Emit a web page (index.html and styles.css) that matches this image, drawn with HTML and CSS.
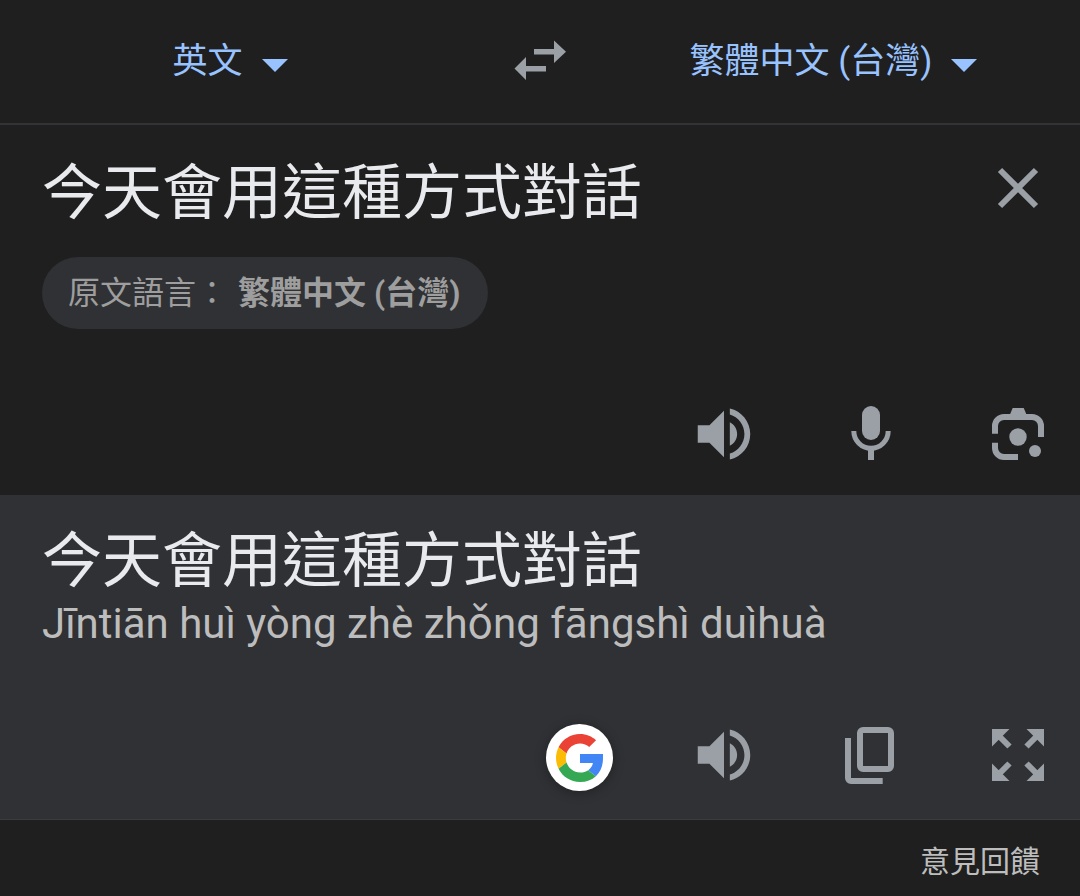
FILE: index.html
```html
<!DOCTYPE html>
<html lang="zh-Hant-TW">
<head>
    <meta charset="UTF-8">
    <meta name="viewport" content="width=device-width, initial-scale=1.0">
    <title>翻譯</title>
    <link rel="stylesheet" href="styles.css">
</head>
<body>

    <!-- Shared icons -->
    <svg class="sprite" aria-hidden="true">
        <symbol id="icon-volume" viewBox="0 0 24 24">
            <path d="M3 9v6h4l5 5V4L7 9H3zm13.5 3c0-1.77-1.02-3.29-2.5-4.03v8.05c1.48-.73 2.5-2.25 2.5-4.02zM14 3.23v2.06c2.89.86 5 3.54 5 6.71s-2.11 5.85-5 6.71v2.06c4.01-.91 7-4.49 7-8.77s-2.99-7.86-7-8.77z"/>
        </symbol>
        <symbol id="icon-caret" viewBox="0 0 26 13">
            <path d="M0 0h26L13 13z"/>
        </symbol>
    </svg>

    <!-- Language bar -->
    <header class="lang-bar">
        <div class="lang lang-source">
            <select aria-label="原文語言">
                <option>英文</option>
            </select>
            <svg class="caret"><use href="#icon-caret"/></svg>
        </div>
        <button class="swap-btn" type="button" aria-label="切換語言">
            <svg viewBox="0 0 52 40">
                <path d="M20 9h20V.5l12 11.2L40 23v-8.5H20z"/>
                <path d="M32 26H12v-9L.5 28.5 12 40v-8.5h20z"/>
            </svg>
        </button>
        <div class="lang lang-target">
            <select aria-label="譯文語言">
                <option>繁體中文 (台灣)</option>
            </select>
            <svg class="caret"><use href="#icon-caret"/></svg>
        </div>
    </header>

    <main>
        <!-- Source text -->
        <section class="panel source">
            <div class="source-row">
                <textarea class="phrase" rows="1" aria-label="輸入文字" spellcheck="false">今天會用這種方式對話</textarea>
                <button class="icon-btn" type="button" aria-label="清除">
                    <svg viewBox="0 0 70 70">
                        <path class="line" d="M17 17l36 36M53 17L17 53"/>
                    </svg>
                </button>
            </div>
            <button class="chip" type="button">原文語言：<b>繁體中文 (台灣)</b></button>
            <div class="toolbar">
                <button class="icon-btn" type="button" aria-label="聆聽">
                    <svg><use href="#icon-volume"/></svg>
                </button>
                <button class="icon-btn" type="button" aria-label="語音輸入">
                    <svg viewBox="0 0 70 70">
                        <rect x="26" y="7" width="18" height="34" rx="9"/>
                        <path class="line mic" d="M17.8 32a17.2 17.2 0 0 0 34.4 0"/>
                        <path d="M32 50h6v11h-6z"/>
                    </svg>
                </button>
                <button class="icon-btn" type="button" aria-label="相機">
                    <svg viewBox="0 0 70 70">
                        <path class="line" d="M12 34.7V27a9 9 0 0 1 9-9h28a9 9 0 0 1 9 9v11M12 43.7V49a9 9 0 0 0 9 9h14"/>
                        <path d="M29.7 9h11l3 7h-17z"/>
                        <circle cx="35" cy="38" r="8.7"/>
                        <circle cx="52" cy="52" r="6"/>
                    </svg>
                </button>
            </div>
        </section>

        <!-- Translation -->
        <section class="panel result">
            <p class="phrase">今天會用這種方式對話</p>
            <p class="pinyin">Jīntiān huì yòng zhè zhǒng fāngshì duìhuà</p>
            <div class="toolbar">
                <button class="google-btn" type="button" aria-label="Google 搜尋">
                    <svg viewBox="0 0 48 48">
                        <path fill="#ea4335" d="M24 9.5c3.54 0 6.71 1.22 9.21 3.6l6.85-6.85C35.9 2.38 30.47 0 24 0 14.62 0 6.51 5.38 2.56 13.22l7.98 6.19C12.43 13.72 17.74 9.5 24 9.5z"/>
                        <path fill="#4285f4" d="M46.98 20H24v9.02h12.94c-.58 2.96-2.26 5.48-4.78 7.18l7.73 6c4.51-4.18 7.09-10.36 7.09-17.65z"/>
                        <path fill="#fbbc05" d="M10.53 28.59c-.48-1.45-.76-2.99-.76-4.59s.27-3.14.76-4.59l-7.98-6.19C.92 16.46 0 20.12 0 24c0 3.88.92 7.54 2.56 10.78l7.97-6.19z"/>
                        <path fill="#34a853" d="M24 48c6.48 0 11.93-2.13 15.89-5.81l-7.73-6c-2.15 1.45-4.92 2.3-8.16 2.3-6.26 0-11.57-4.22-13.47-9.91l-7.98 6.19C6.51 42.62 14.62 48 24 48z"/>
                    </svg>
                </button>
                <button class="icon-btn" type="button" aria-label="聆聽譯文">
                    <svg><use href="#icon-volume"/></svg>
                </button>
                <button class="icon-btn" type="button" aria-label="複製">
                    <svg viewBox="0 0 70 70">
                        <rect class="line" x="24" y="10" width="31" height="39" rx="3"/>
                        <path class="line" d="M12 18v40a3 3 0 0 0 3 3h31.7"/>
                    </svg>
                </button>
                <button class="icon-btn" type="button" aria-label="全螢幕">
                    <svg viewBox="0 0 70 70">
                        <path d="M9 9h17.5L9 26.5zM61 9v17.5L43.5 9zM9 61V43.5L26.5 61zM61 61H43.5L61 43.500z"/>
                        <path class="line" d="M14 14l12.5 12.5M56 14L43.5 26.5M14 56l12.5-12.5M56 56L43.5 43.5"/>
                    </svg>
                </button>
            </div>
        </section>
    </main>

    <footer>
        <a href="#feedback">意見回饋</a>
    </footer>

</body>
</html>
```
FILE: styles.css
```css
* {
    box-sizing: border-box;
}

body {
    margin: 0;
    background-color: #1f1f1f;
    color: #e8eaed;
    font-family: Roboto, "Noto Sans CJK TC", sans-serif;
}

button, select, textarea {
    margin: 0;
    padding: 0;
    border: none;
    background: none;
    color: inherit;
    font-family: inherit;
}

button {
    cursor: pointer;
}

svg {
    display: block;
    fill: currentColor;
}

.sprite {
    display: none;
}

/* Language bar */
.lang-bar {
    display: grid;
    grid-template-columns: 1fr 160px 1fr;
    align-items: center;
    height: 125px;
    padding-bottom: 3px;
    border-bottom: 2px solid #333335;
}

.lang {
    display: flex;
    justify-content: center;
    align-items: center;
    gap: 18px;
    color: #99c3ff;
}

.lang-target {
    padding-right: 34px;
}

.lang select {
    appearance: none;
    padding-top: 4px;
    font-size: 35px;
    line-height: 48px;
}

.caret {
    width: 26px;
    height: 13px;
    margin-top: 10px;
}

.swap-btn {
    justify-self: center;
    color: #9aa0a6;
}

.swap-btn svg {
    width: 52px;
    height: 40px;
}

/* Panels */
.panel {
    padding: 27px 26px 25px 42px;
}

.phrase {
    margin: 0;
    font-size: 60px;
    line-height: 72px;
}

.source-row {
    display: flex;
    align-items: center;
}

.source-row .phrase {
    flex: 1;
    min-width: 0;
    height: 72px;
    overflow: hidden;
    line-height: 84px;
    resize: none;
}

.chip {
    display: block;
    height: 72px;
    margin-top: 33px;
    padding: 0 28px 0 26px;
    border-radius: 36px;
    background-color: #303134;
    color: #9e9e9e;
    font-size: 32px;
    line-height: 72px;
}

.chip b {
    margin-left: 10px;
}

.toolbar {
    display: flex;
    justify-content: flex-end;
    align-items: flex-end;
    gap: 75px;
    margin-top: 69px;
}

.icon-btn {
    display: flex;
    justify-content: center;
    align-items: center;
    width: 72px;
    height: 72px;
    color: #9aa0a6;
}

.icon-btn svg {
    width: 70px;
    height: 70px;
}

.line {
    fill: none;
    stroke: currentColor;
    stroke-width: 6;
}

.mic {
    stroke-width: 5;
}

/* Translation */
.result {
    padding-top: 31px;
    padding-bottom: 28px;
    border-bottom: 1px solid #3c3c3f;
    background-color: #303134;
}

.pinyin {
    margin: 0;
    color: #bdbdbd;
    font-size: 42px;
    line-height: 52px;
}

.result .toolbar {
    margin-top: 69px;
}

.google-btn {
    display: flex;
    justify-content: center;
    align-items: center;
    width: 67px;
    height: 67px;
    border-radius: 50%;
    background-color: #fff;
    box-shadow: 0 2px 12px rgba(0, 0, 0, 0.3);
}

.google-btn svg {
    width: 48px;
    height: 48px;
}

footer {
    padding: 22px 40px 14px;
    text-align: right;
}

footer a {
    color: #bdbdbd;
    font-size: 30px;
    line-height: 40px;
    text-decoration: none;
}
```
